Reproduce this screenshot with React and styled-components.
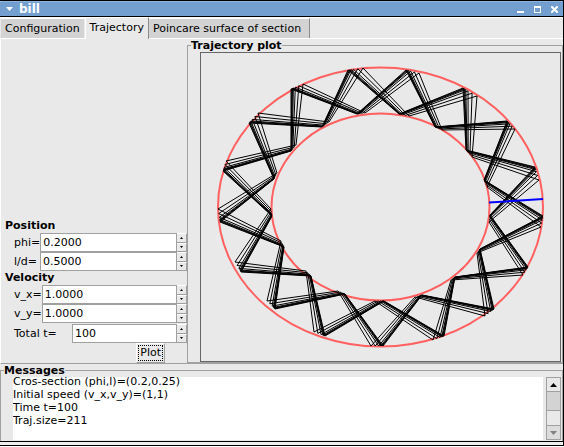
import React from 'react';
import styled, { createGlobalStyle } from 'styled-components';

const face = '#e9e9e9';
const shadow = '#a0a0a0';

const GlobalStyle = createGlobalStyle`
  * { box-sizing: border-box; }
  body { margin: 0; background: #ffffff; }
  body, button, input, textarea {
    font-family: "DejaVu Sans", sans-serif;
    font-size: 11px;
    line-height: 13px;
    color: #000000;
  }
`;

const Window = styled.main`
  background: ${face};
  border: solid #000000;
  border-width: 1px 1px 1px 0;
`;

const TitleBar = styled.header`
  display: flex;
  align-items: center;
  height: 16px;
  padding: 0 0 0 3px;
  background: #729fcf;
  border-top: 1px solid #8fb3da;
  border-bottom: 1px solid #000000;
`;

const Title = styled.h1`
  flex: 1;
  margin: 0 0 0 4px;
  font-size: 12px;
  line-height: 14px;
  color: #ffffff;
`;

const TitleButton = styled.button`
  display: flex;
  width: ${(p) => p.$width || 17}px;
  height: 14px;
  padding: 0;
  justify-content: center;
  align-items: center;
  border: 0;
  background: none;
`;

const TabBar = styled.nav`
  display: flex;
  align-items: flex-end;
  height: 22px;
  padding-left: 1px;
  border-top: 1px solid #ffffff;
  border-bottom: 1px solid #ffffff;
`;

const Tab = styled.button`
  height: ${(p) => (p.$active ? 22 : 20)}px;
  margin-bottom: ${(p) => (p.$active ? -1 : 0)}px;
  padding: 0 ${(p) => (p.$wide ? 8 : 4)}px ${(p) => (p.$active ? 2 : 0)}px 4px;
  border: solid #ffffff;
  border-width: 1px 0 0 ${(p) => (p.$active ? 1 : 0)}px;
  border-right: 1px solid ${(p) => (p.$first ? face : '#8c8c8c')};
  background: ${(p) => (p.$active ? face : '#d3d3d3')};
  white-space: nowrap;
`;

const Workspace = styled.div`
  display: flex;
  border-left: 1px solid #ffffff;
  border-bottom: 1px solid ${shadow};
`;

const Controls = styled.form`
  display: flex;
  flex-direction: column;
  justify-content: flex-end;
  flex: 0 0 186px;
  min-width: 0;
  padding-left: 4px;
`;

const Heading = styled.h2`
  margin: 0;
  height: 14px;
  font-size: 11px;
  line-height: 14px;
`;

const Field = styled.div`
  display: flex;
  align-items: center;
  height: 19px;
  padding-left: 9px;
  margin-top: ${(p) => (p.$spaced ? 1 : 0)}px;
`;

const Label = styled.label`
  flex: 0 0 ${(p) => p.$width || 26}px;
  white-space: nowrap;
`;

const NumberInput = styled.input`
  flex: 1;
  min-width: 0;
  height: 19px;
  padding: 0 2px;
  border: 1px solid ${shadow};
  border-radius: 0;
  background: #ffffff;
  outline: 0;
`;

const Spinner = styled.span`
  display: flex;
  flex-direction: column;
  flex: 0 0 10px;
  height: 19px;
`;

const SpinButton = styled.button`
  display: flex;
  flex: 1;
  align-items: center;
  justify-content: center;
  padding: 0;
  border: solid #ffffff;
  border-width: 1px 1px 1px 0;
  border-right-color: ${shadow};
  border-bottom-color: ${shadow};
  background: ${face};
`;

const PlotButton = styled.button`
  align-self: flex-end;
  height: 20px;
  margin-right: 22px;
  padding: 1px;
  border: 1px solid #ffffff;
  border-right-color: ${shadow};
  border-bottom-color: ${shadow};
  background: ${face};

  span {
    display: block;
    padding: 0 1px 1px;
    border: 1px dotted #000000;
  }
`;

const Group = styled.fieldset`
  flex: 1;
  min-width: 0;
  margin: 0;
  padding: ${(p) => p.$padding};
  border: 1px solid ${shadow};
  border-bottom: ${(p) => (p.$open ? 0 : 1)}px solid ${shadow};
`;

const Legend = styled.legend`
  height: 13px;
  margin-left: -9px;
  padding: 0;
  font-weight: bold;
`;

const Canvas = styled.div`
  border: 1px solid #666666;

  svg { display: block; width: 100%; height: auto; }
`;

const LogRow = styled.div`
  display: flex;
  height: 64px;
`;

const LogView = styled.div`
  flex: 1;
  height: 63px;
  overflow: hidden;
  background: #ffffff;
`;

const Log = styled.textarea`
  display: block;
  width: 100%;
  height: 65px;
  margin-top: -2px;
  padding: 0;
  border: 0;
  outline: 0;
  overflow: hidden;
  resize: none;
  background: #ffffff;
`;

const Scrollbar = styled.div`
  display: flex;
  flex-direction: column;
  flex: 0 0 15px;
  height: 63px;
  margin-left: 3px;
  border: 1px solid ${shadow};
  background: ${face};
`;

const ScrollArrow = styled.button`
  display: flex;
  height: 13px;
  padding: 0;
  align-items: center;
  justify-content: center;
  border: 0;
  background: ${(p) => (p.$end ? '#dcdcdc' : face)};
`;

const Thumb = styled.div`
  height: 20px;
  border: solid ${shadow};
  border-width: 1px 0;
  background: #d3d3d3;
`;

const Track = styled.div`
  flex: 1;
  border-bottom: 1px solid ${shadow};
`;

const BottomEdge = styled.div`
  height: 4px;
  background: #eeeeee;
  border-top: 1px solid #000000;
`;

// Bounce points: [x, y] of the settled end, then [x, y] of the first pass.
const outer = [
  [406, 70, 419, 73], [463, 88, 477, 96], [507, 121, 515, 129], [535, 167, 539, 180],
  [543, 216, 541, 227], [528, 267, 523, 275], [494, 309, 485, 316], [444, 336, 433, 340],
  [383, 346, 371, 346], [325, 336, 314, 332], [275, 309, 267, 301], [241, 272, 235, 262],
  [220, 222, 218, 209], [223, 171, 226, 161], [249, 123, 258, 113], [291, 89, 303, 84],
  [348, 70, 363, 68],
];
const inner = [
  [399, 114, 409, 116], [435, 127, 442, 130], [466, 150, 472, 157], [484, 180, 487, 187],
  [490, 215, 489, 222], [480, 249, 477, 253], [455, 277, 451, 280], [422, 295, 415, 297],
  [384, 301, 375, 301], [345, 294, 338, 291], [311, 276, 306, 271], [284, 247, 281, 241],
  [272, 216, 271, 209], [274, 179, 277, 173], [291, 151, 296, 145], [322, 127, 329, 122],
  [357, 114, 365, 113],
];
const passes = [0, 0.06, 0.12, 0.2, 0.36, 0.65, 1];

const at = ([x0, y0, x1, y1], t) => `${x0 + (x1 - x0) * t} ${y0 + (y1 - y0) * t}`;

const trajectory = outer.flatMap((point, k) => {
  const before = inner[(k + 16) % 17];
  const after = inner[(k + 1) % 17];
  return passes.map((t) => `M${at(before, t)}L${at(point, t)}L${at(after, t)}`);
});

function TrajectoryPlot() {
  return (
    <svg viewBox="201 53 359 308" role="img" aria-label="Trajectory plot">
      <g fill="none" stroke="#ff6060" strokeWidth="2">
        <ellipse cx="380.5" cy="207" rx="162.5" ry="139.5" />
        <ellipse cx="380.5" cy="207" rx="109" ry="93.5" />
      </g>
      <g fill="none" stroke="#000000" strokeLinejoin="bevel">
        {trajectory.map((d) => <path key={d} d={d} />)}
      </g>
      <path d="M489 202.5L543 199" stroke="#0000ff" strokeWidth="2" />
    </svg>
  );
}

function Triangle({ down, size = 3, color = '#000000' }) {
  return (
    <svg width={size * 2 - 1} height={size} viewBox="0 0 10 10" preserveAspectRatio="none">
      <path d={down ? 'M0 0H10L5 10Z' : 'M0 10H10L5 0Z'} fill={color} />
    </svg>
  );
}

function SpinField({ id, label, value, labelWidth, spaced }) {
  return (
    <Field $spaced={spaced}>
      <Label htmlFor={id} $width={labelWidth}>{label}</Label>
      <NumberInput id={id} defaultValue={value} />
      <Spinner>
        <SpinButton type="button" aria-label={`Increase ${id}`}><Triangle size={2} /></SpinButton>
        <SpinButton type="button" aria-label={`Decrease ${id}`}><Triangle size={2} down /></SpinButton>
      </Spinner>
    </Field>
  );
}

const messages = [
  'Cros-section (phi,l)=(0.2,0.25)',
  'Initial speed (v_x,v_y)=(1,1)',
  'Time t=100',
  'Traj.size=211',
].join('\n');

export default function App() {
  return (
    <>
      <GlobalStyle />
      <Window>
        <TitleBar>
          <TitleButton aria-label="Window menu" $width={12}>
            <svg width="7" height="4" viewBox="0 0 7 4"><path d="M0 0H7L3.500 4Z" fill="#fff" /></svg>
          </TitleButton>
          <Title>bill</Title>
          <TitleButton aria-label="Minimize">
            <svg width="7" height="7" viewBox="0 0 7 7"><path d="M0 5H7V7H0Z" fill="#fff" /></svg>
          </TitleButton>
          <TitleButton aria-label="Maximize">
            <svg width="7" height="7" viewBox="0 0 7 7">
              <path d="M0 0H7V7H0ZM1 2V6H6V2Z" fill="#fff" fillRule="evenodd" />
            </svg>
          </TitleButton>
          <TitleButton aria-label="Close">
            <svg width="7" height="7" viewBox="0 0 7 7">
              <path d="M1 1L6 6M6 1L1 6" stroke="#fff" strokeWidth="2" strokeLinecap="square" />
            </svg>
          </TitleButton>
        </TitleBar>
        <TabBar>
          <Tab $first>Configuration</Tab>
          <Tab $active>Trajectory</Tab>
          <Tab $wide>Poincare surface of section</Tab>
        </TabBar>
        <Workspace>
          <Controls onSubmit={(e) => e.preventDefault()}>
            <Heading>Position</Heading>
            <SpinField id="phi" label="phi=" value="0.2000" />
            <SpinField id="l-d" label="l/d=" value="0.5000" />
            <Heading>Velocity</Heading>
            <SpinField id="v_x" label="v_x=" value="1.0000" />
            <SpinField id="v_y" label="v_y=" value="1.0000" />
            <SpinField id="total-t" label="Total t=" value="100" labelWidth={58} spaced />
            <PlotButton type="submit"><span>Plot</span></PlotButton>
          </Controls>
          <Group $padding="0 1px 0 12px">
            <Legend>Trajectory plot</Legend>
            <Canvas><TrajectoryPlot /></Canvas>
          </Group>
        </Workspace>
        <Group $padding="0 1px 0 12px" $open>
          <Legend>Messages</Legend>
          <LogRow>
            <LogView><Log aria-label="Messages" readOnly value={messages} /></LogView>
            <Scrollbar>
              <ScrollArrow aria-label="Scroll up"><Triangle size={4} /></ScrollArrow>
              <Thumb />
              <Track />
              <ScrollArrow aria-label="Scroll down" $end><Triangle size={4} down color="#808080" /></ScrollArrow>
            </Scrollbar>
          </LogRow>
        </Group>
        <BottomEdge />
      </Window>
    </>
  );
}
